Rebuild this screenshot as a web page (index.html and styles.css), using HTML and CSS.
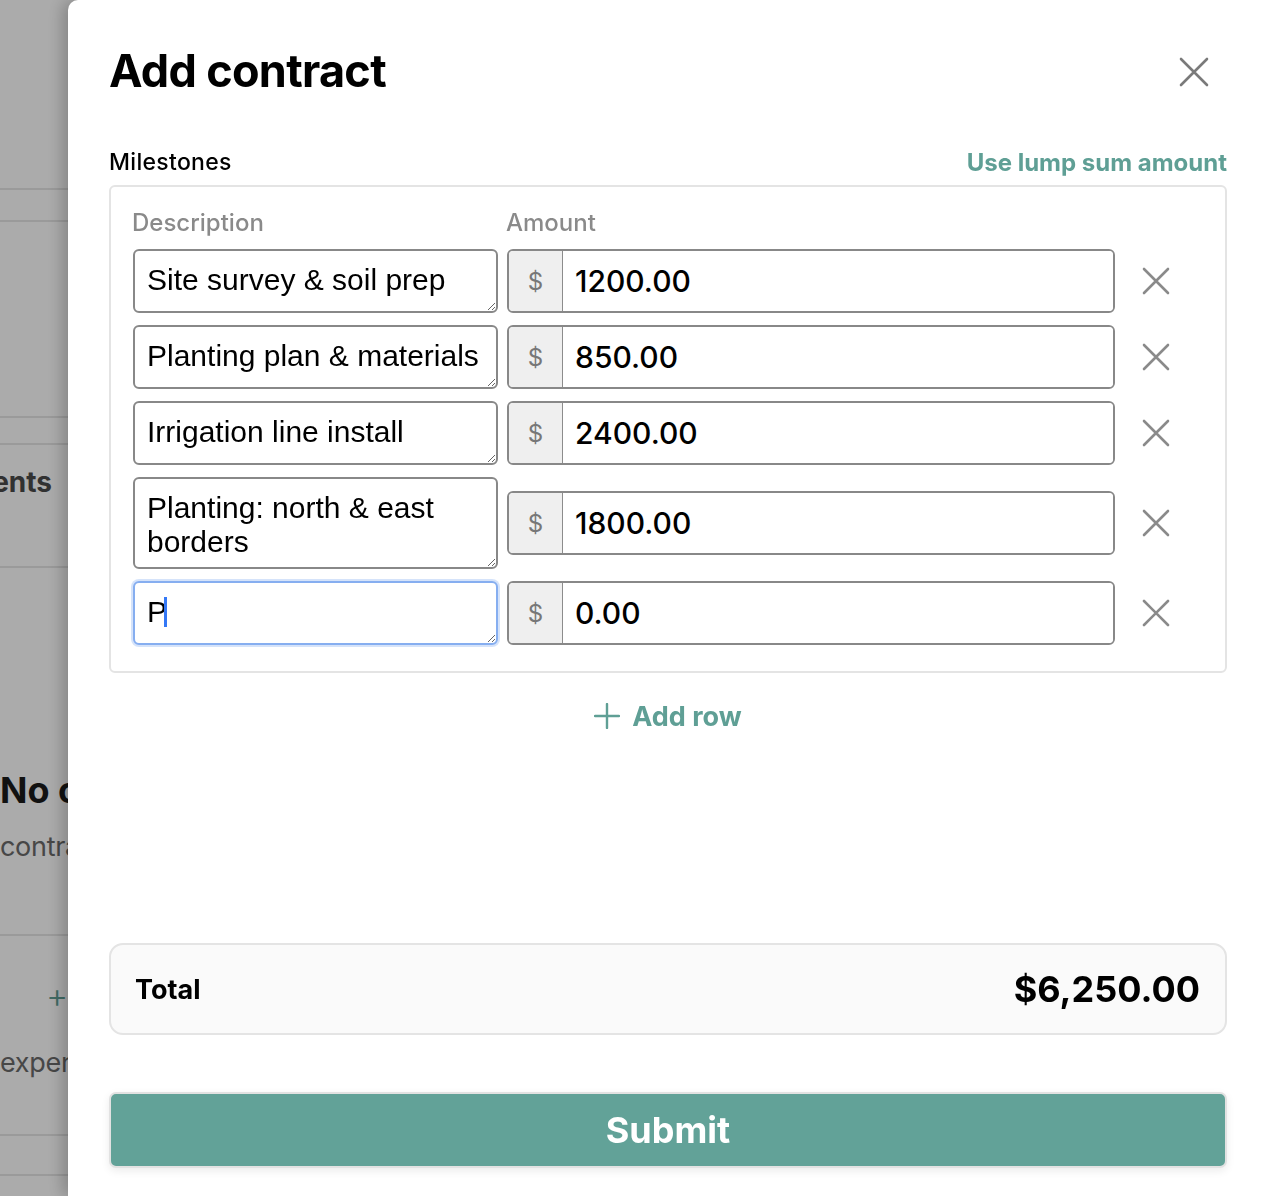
FILE: index.html
```html
<!DOCTYPE html>
<html lang="en">
<head>
<meta charset="utf-8">
<title>Add contract</title>
<link rel="stylesheet" href="styles.css">
</head>
<body>
<div class="page">
  <div class="pg-sec pg-top"></div>
  <div class="pg-sec pg-tabs"></div>
  <div class="pg-sec pg-block"></div>
  <div class="pg-sec pg-thin"></div>
  <div class="pg-sec pg-heading"><span class="pg-title">Payments</span></div>
  <div class="pg-sec pg-empty">
    <div class="pg-empty-title">No contracts yet</div>
    <div class="pg-empty-sub">contracts will appear here</div>
  </div>
  <div class="pg-sec pg-add">
    <div class="pg-plus">+</div>
    <div class="pg-empty-sub">expenses</div>
  </div>
  <div class="pg-sec pg-end"></div>
</div>
<div class="overlay"></div>
<aside class="drawer">
  <header class="drawer-head">
    <h1 class="drawer-title">Add contract</h1>
    <button class="icon-btn close-btn" aria-label="Close">
      <svg width="30" height="30" viewBox="0 0 30 30"><path d="M2 2 L28 28 M28 2 L2 28" stroke="#7a7a7a" stroke-width="2.6" stroke-linecap="round" fill="none"/></svg>
    </button>
  </header>

  <div class="section-head">
    <span class="section-label">Milestones</span>
    <a class="link-btn">Use lump sum amount</a>
  </div>

  <div class="milestones">
    <div class="ms-grid">
      <div class="col-label">Description</div>
      <div class="col-label">Amount</div>
      <div></div>

      <textarea class="desc">Site survey &amp; soil prep</textarea>
      <div class="amount"><span class="prefix">$</span><input class="amount-input" value="1200.00"></div>
      <button class="icon-btn row-remove" aria-label="Remove"><svg width="30" height="30" viewBox="0 0 30 30"><path d="M3 3 L27 27 M27 3 L3 27" stroke="#8a8a8a" stroke-width="2.6" stroke-linecap="round" fill="none"/></svg></button>

      <textarea class="desc">Planting plan &amp; materials</textarea>
      <div class="amount"><span class="prefix">$</span><input class="amount-input" value="850.00"></div>
      <button class="icon-btn row-remove" aria-label="Remove"><svg width="30" height="30" viewBox="0 0 30 30"><path d="M3 3 L27 27 M27 3 L3 27" stroke="#8a8a8a" stroke-width="2.6" stroke-linecap="round" fill="none"/></svg></button>

      <textarea class="desc">Irrigation line install</textarea>
      <div class="amount"><span class="prefix">$</span><input class="amount-input" value="2400.00"></div>
      <button class="icon-btn row-remove" aria-label="Remove"><svg width="30" height="30" viewBox="0 0 30 30"><path d="M3 3 L27 27 M27 3 L3 27" stroke="#8a8a8a" stroke-width="2.6" stroke-linecap="round" fill="none"/></svg></button>

      <textarea class="desc desc-tall">Planting: north &amp; east borders</textarea>
      <div class="amount"><span class="prefix">$</span><input class="amount-input" value="1800.00"></div>
      <button class="icon-btn row-remove" aria-label="Remove"><svg width="30" height="30" viewBox="0 0 30 30"><path d="M3 3 L27 27 M27 3 L3 27" stroke="#8a8a8a" stroke-width="2.6" stroke-linecap="round" fill="none"/></svg></button>

      <div class="desc-wrap">
        <textarea class="desc is-focused">P</textarea>
        <span class="caret"></span>
      </div>
      <div class="amount"><span class="prefix">$</span><input class="amount-input" value="0.00"></div>
      <button class="icon-btn row-remove" aria-label="Remove"><svg width="30" height="30" viewBox="0 0 30 30"><path d="M3 3 L27 27 M27 3 L3 27" stroke="#8a8a8a" stroke-width="2.6" stroke-linecap="round" fill="none"/></svg></button>
    </div>
  </div>

  <button class="add-row">
    <svg width="26" height="26" viewBox="0 0 26 26"><path d="M13 1 V25 M1 13 H25" stroke="#5f9f95" stroke-width="2.4" stroke-linecap="round" fill="none"/></svg>
    <span>Add row</span>
  </button>

  <div class="total">
    <span class="total-label">Total</span>
    <span class="total-value">$6,250.00</span>
  </div>

  <button class="submit">Submit</button>
</aside>
</body>
</html>
```

FILE: styles.css
```css
* { box-sizing: border-box; }

html, body {
  margin: 0;
  padding: 0;
}

body {
  width: 1268px;
  height: 1196px;
  overflow: hidden;
  background: #ffffff;
  font-family: Inter, "Noto Sans", sans-serif;
  color: #000;
}

/* underlying page */
.page {
  width: 420px;
}
.pg-sec {
  border-bottom: 2px solid #e6e6e6;
}
.pg-top { height: 190px; }
.pg-tabs { height: 32px; }
.pg-block { height: 196px; }
.pg-thin { height: 27px; }
.pg-heading {
  height: 123px;
  width: 420px;
  display: flex;
  align-items: flex-start;
  padding-top: 20px;
}
.pg-title {
  display: flex;
  justify-content: flex-end;
  width: 52px;
  white-space: nowrap;
  font-size: 28px;
  font-weight: 700;
  color: #4a4a4a;
  line-height: 34px;
}
.pg-empty {
  height: 368px;
  padding-top: 200px;
}
.pg-empty-title {
  font-size: 36px;
  font-weight: 700;
  color: #1a1a1a;
  white-space: nowrap;
  line-height: 44px;
}
.pg-empty-sub {
  font-size: 27px;
  color: #6a6a6a;
  white-space: nowrap;
  line-height: 34px;
  margin-top: 18px;
  letter-spacing: -0.3px;
}
.pg-add {
  height: 200px;
  padding-top: 40px;
}
.pg-plus {
  margin-left: 46px;
  font-size: 34px;
  font-weight: 300;
  color: #5f9f95;
  line-height: 40px;
}
.pg-add .pg-empty-sub {
  margin-top: 30px;
}
.pg-end { height: 40px; }

.overlay {
  position: fixed;
  inset: 0;
  background: rgba(0, 0, 0, 0.33);
}

/* drawer */
.drawer {
  position: fixed;
  top: 0;
  right: 0;
  bottom: 0;
  width: 1200px;
  background: #fff;
  border-top-left-radius: 10px;
  box-shadow: -6px 0 16px rgba(0, 0, 0, 0.22);
  display: flex;
  flex-direction: column;
  padding: 40px 41px 28px 41px;
}

.drawer-head {
  height: 64px;
  display: flex;
  align-items: center;
  justify-content: space-between;
}
.drawer-title {
  margin: 0;
  font-size: 45px;
  font-weight: 700;
  letter-spacing: -0.7px;
  line-height: 56px;
  margin-top: -2px;
}
.icon-btn {
  border: 0;
  background: none;
  padding: 0;
  cursor: pointer;
  display: flex;
  align-items: center;
  justify-content: center;
}
.close-btn {
  width: 40px;
  height: 40px;
  margin-right: 13px;
}

.section-head {
  margin-top: 44px;
  height: 28px;
  display: flex;
  align-items: center;
  justify-content: space-between;
}
.section-label {
  font-size: 23px;
  font-weight: 500;
  letter-spacing: 0.3px;
}
.link-btn {
  font-size: 24px;
  font-weight: 700;
  color: #5f9f95;
  cursor: pointer;
}

.milestones {
  margin-top: 9px;
  border: 2px solid #e4e4e4;
  border-radius: 6px;
  padding: 22px 22px 26px 22px;
}
.ms-grid {
  display: grid;
  grid-template-columns: 365px 608px 64px;
  column-gap: 9px;
  row-gap: 12px;
  align-items: center;
}
.col-label {
  font-size: 24px;
  font-weight: 500;
  color: #8a8a8a;
  line-height: 28px;
  margin-left: -1px;
}

.desc {
  display: block;
  width: 365px;
  height: 64px;
  margin: 0;
  border: 2px solid #888888;
  border-radius: 6px;
  padding: 12px 12px;
  font-family: "Liberation Sans", Arial, sans-serif;
  font-size: 30px;
  line-height: 34px;
  color: #000;
  background: #fff;
  resize: vertical;
  overflow: hidden;
  outline: none;
}
.desc-tall {
  height: 92px;
}
.desc.is-focused {
  border-color: #86aef0;
  box-shadow: 0 0 0 2px rgba(134, 174, 240, 0.35);
}
.desc-wrap {
  position: relative;
}
.caret {
  position: absolute;
  left: 31px;
  top: 16px;
  width: 3px;
  height: 30px;
  background: #3478f6;
}

.amount {
  display: flex;
  height: 64px;
  border: 2px solid #888888;
  border-radius: 6px;
  overflow: hidden;
}
.prefix {
  width: 54px;
  flex: none;
  background: #efefef;
  border-right: 1px solid #8c8c8c;
  display: flex;
  align-items: center;
  justify-content: center;
  font-size: 24px;
  color: #777;
}
.amount-input {
  flex: 1;
  min-width: 0;
  border: 0;
  outline: none;
  padding: 0 12px;
  font-family: Inter, "Noto Sans", sans-serif;
  font-size: 30px;
  font-weight: 500;
  color: #000;
  background: #fff;
}

.row-remove {
  width: 64px;
  height: 64px;
}

.add-row {
  margin: 25px auto 0 auto;
  height: 36px;
  border: 0;
  background: none;
  display: flex;
  align-items: center;
  gap: 12px;
  font-family: Inter, "Noto Sans", sans-serif;
  font-size: 27px;
  font-weight: 700;
  color: #5f9f95;
  cursor: pointer;
  padding: 0;
}

.total {
  margin-top: auto;
  height: 92px;
  border: 2px solid #e4e4e4;
  border-radius: 14px;
  background: #fafafa;
  display: flex;
  align-items: center;
  justify-content: space-between;
  padding: 0 25px 0 24px;
}
.total-label {
  font-size: 27px;
  font-weight: 700;
}
.total-value {
  font-size: 36px;
  font-weight: 700;
}

.submit {
  margin-top: 57px;
  height: 76px;
  border: 2px solid #e2e2e2;
  border-radius: 7px;
  background: #62a298;
  color: #fff;
  font-family: Inter, "Noto Sans", sans-serif;
  font-size: 36px;
  font-weight: 700;
  box-shadow: 0 3px 8px rgba(0, 0, 0, 0.08);
  cursor: pointer;
}
```
